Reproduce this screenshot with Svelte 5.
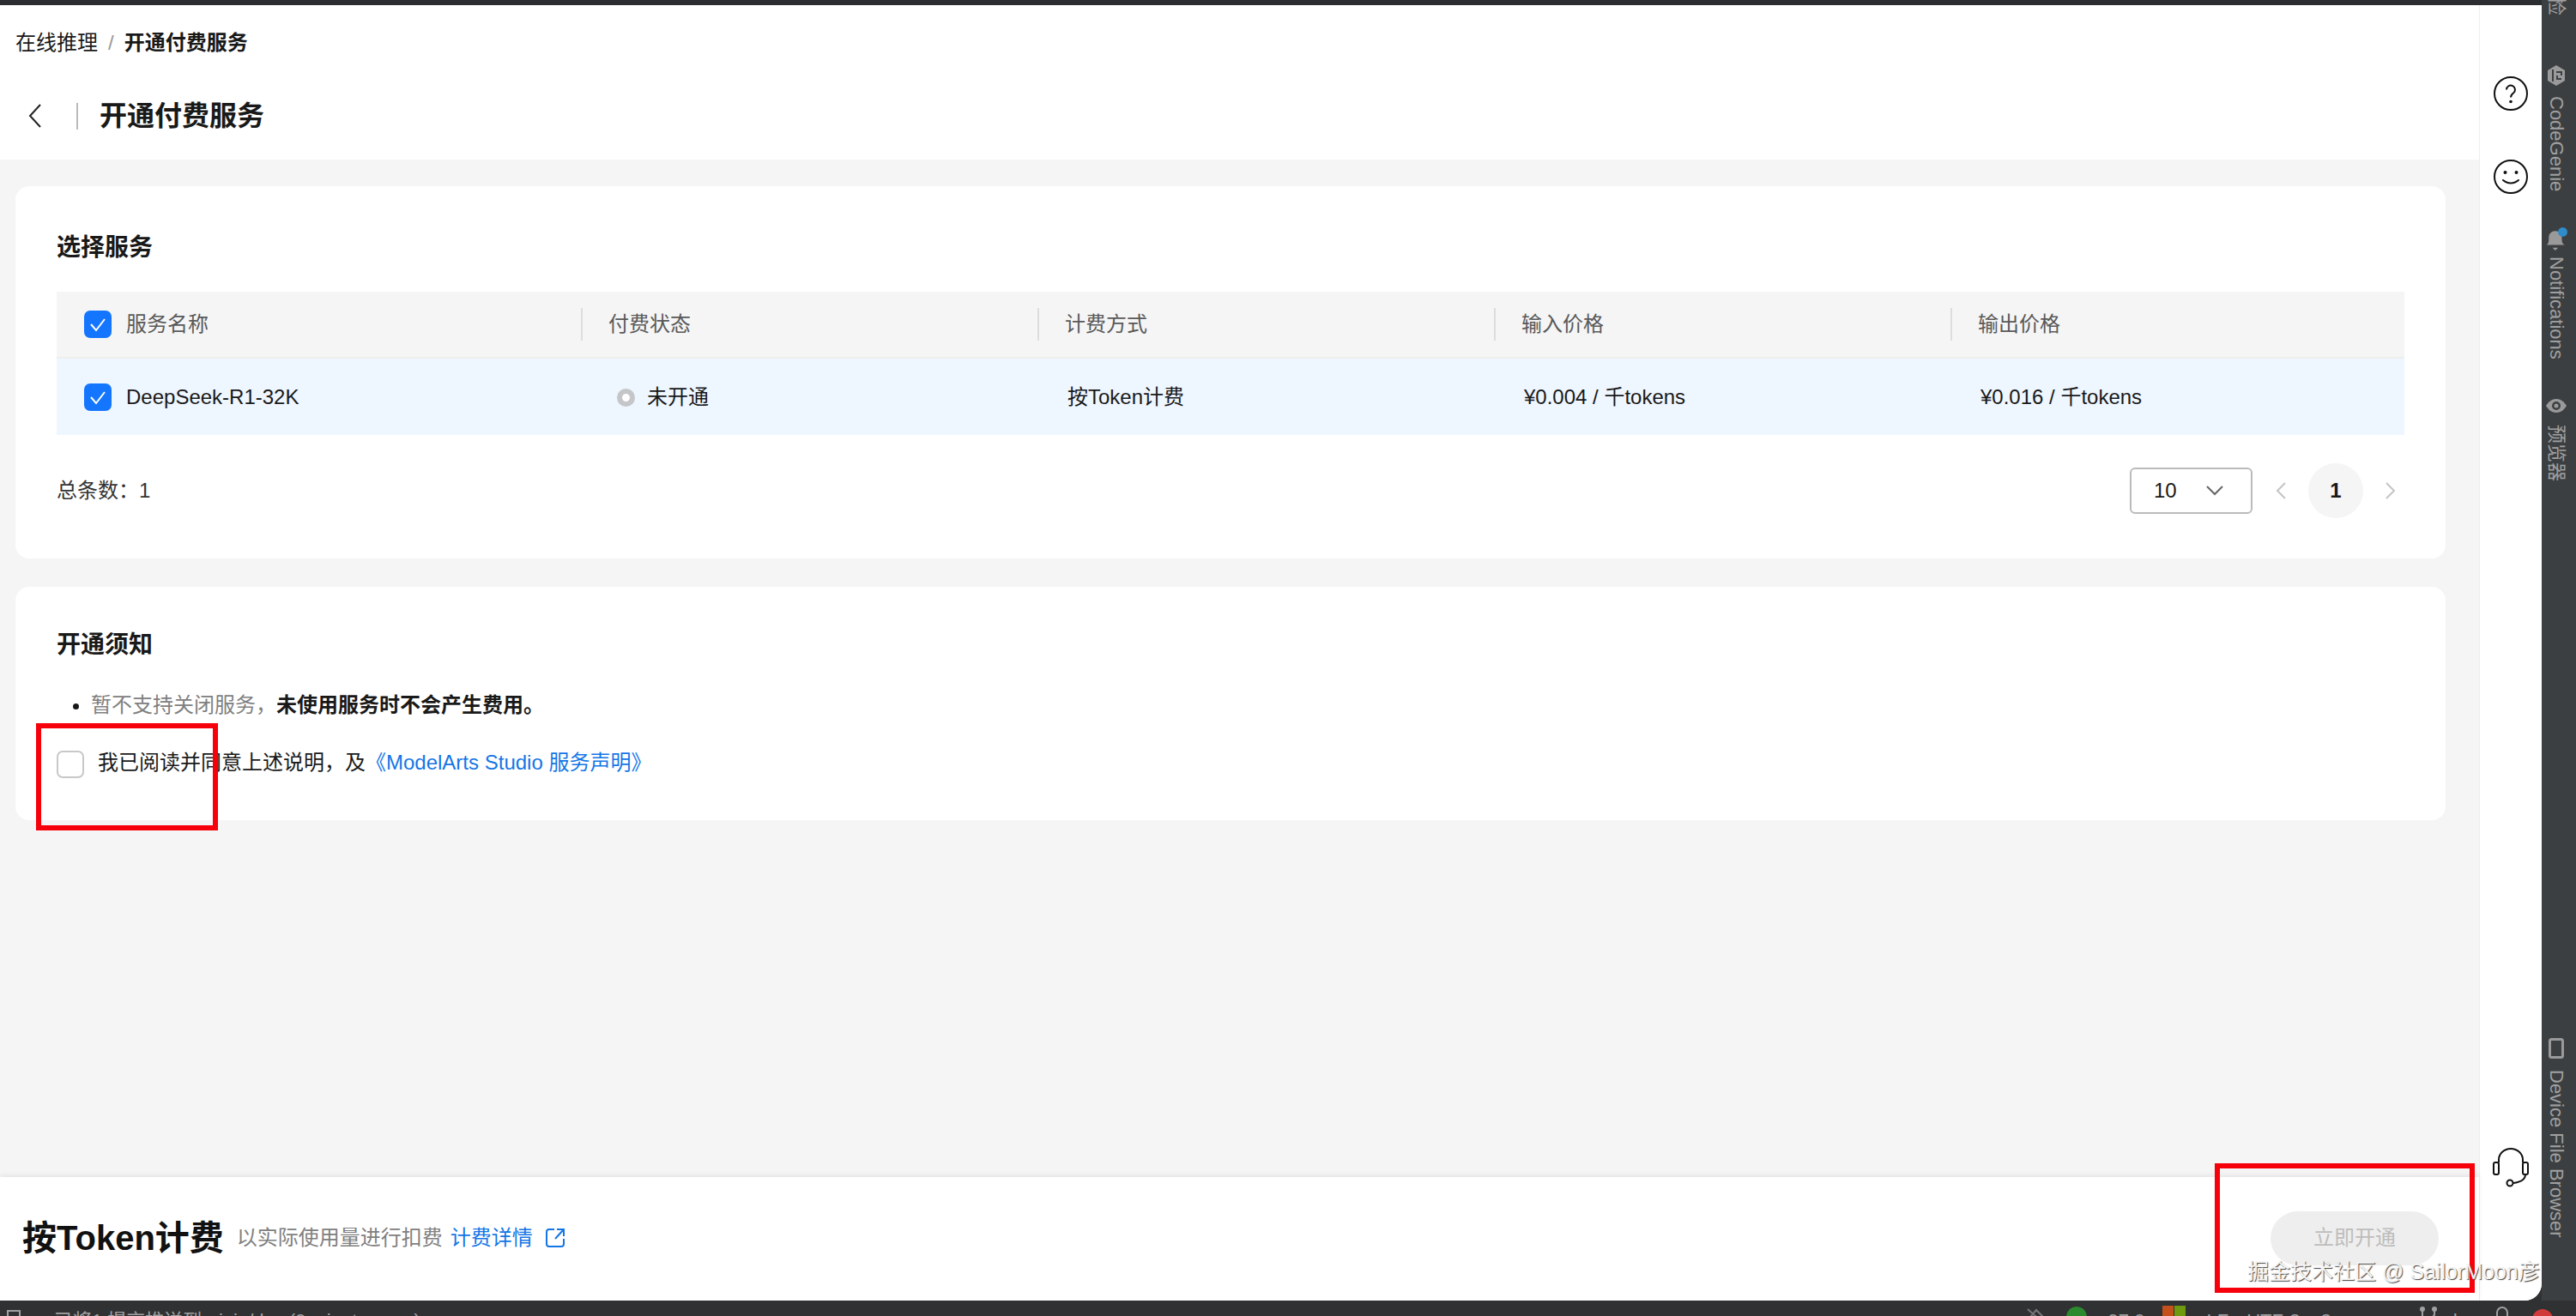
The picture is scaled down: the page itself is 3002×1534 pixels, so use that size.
<script>
	const columns = [
		{ title: '服务名称', value: 'DeepSeek-R1-32K' },
		{ title: '付费状态', value: '未开通', status: true },
		{ title: '计费方式', value: '按Token计费' },
		{ title: '输入价格', value: '¥0.004 / 千tokens' },
		{ title: '输出价格', value: '¥0.016 / 千tokens' }
	];
</script>

{#snippet check()}
	<span class="check">
		<svg viewBox="0 0 32 32" width="32" height="32">
			<polyline points="8,16 14,23 24,10" fill="none" stroke="#fff" stroke-width="2" />
		</svg>
	</span>
{/snippet}

<div class="window">
	<div class="top-area">
		<div class="left">
			<div class="topbar"></div>
			<div class="panes">
				<main class="main">
					<header class="head">
						<div class="crumbs">
							<span>在线推理</span>
							<span class="slash">/</span>
							<b>开通付费服务</b>
						</div>
						<div class="title-row">
							<svg class="back" viewBox="0 0 16 32" width="16" height="32">
								<polyline points="14,3 2,16 14,29" fill="none" stroke="#222" stroke-width="2" />
							</svg>
							<span class="title-div"></span>
							<h1>开通付费服务</h1>
						</div>
					</header>

					<div class="content">
						<section class="card">
							<h2>选择服务</h2>
							<div class="table">
								<div class="tr th">
									{#each columns as col, i}
										<div class="cell" class:first={i === 0}>
											{#if i === 0}{@render check()}{/if}
											<span>{col.title}</span>
										</div>
									{/each}
								</div>
								<div class="tr td">
									{#each columns as col, i}
										<div class="cell" class:first={i === 0}>
											{#if i === 0}{@render check()}{/if}
											{#if col.status}<span class="dot"></span>{/if}
											<span>{col.value}</span>
										</div>
									{/each}
								</div>
							</div>
							<div class="pager-row">
								<span>总条数：1</span>
								<div class="pager">
									<div class="select">
										<span>10</span>
										<svg viewBox="0 0 20 12" width="20" height="12">
											<polyline points="1,1 10,10 19,1" fill="none" stroke="#666" stroke-width="2" />
										</svg>
									</div>
									<svg viewBox="0 0 14 22" width="14" height="22">
										<polyline points="12,2 3,11 12,20" fill="none" stroke="#c4c4c4" stroke-width="2" />
									</svg>
									<span class="page">1</span>
									<svg viewBox="0 0 14 22" width="14" height="22">
										<polyline points="2,2 11,11 2,20" fill="none" stroke="#c4c4c4" stroke-width="2" />
									</svg>
								</div>
							</div>
						</section>

						<section class="card notice">
							<h2>开通须知</h2>
							<ul>
								<li><span class="muted">暂不支持关闭服务，</span><b>未使用服务时不会产生费用。</b></li>
							</ul>
							<div class="agree">
								<span class="box"></span>
								<span class="agree-text">我已阅读并同意上述说明，及</span>
								<a class="agree-text" href="#top">《ModelArts Studio 服务声明》</a>
							</div>
						</section>
					</div>

					<footer class="foot">
						<div class="price">
							<strong>按Token计费</strong>
							<span class="muted">以实际使用量进行扣费</span>
							<a href="#top">计费详情</a>
							<svg viewBox="0 0 24 24" width="24" height="24">
								<path d="M11 2H5a3 3 0 0 0-3 3v14a3 3 0 0 0 3 3h14a3 3 0 0 0 3-3v-6M14 2h8v8M22 2 12 13" fill="none" stroke="#1476e6" stroke-width="2" />
							</svg>
						</div>
						<button disabled>立即开通</button>
					</footer>
				</main>

				<aside class="side">
					<svg viewBox="0 0 40 40" width="40" height="40">
						<circle cx="20" cy="20" r="19" fill="none" stroke="#111" stroke-width="2" />
						<path d="M15 15.5a5 5 0 1 1 8 4c-2 1.500-3 2.500-3 5" fill="none" stroke="#111" stroke-width="2" />
						<circle cx="20" cy="29.500" r="1.800" fill="#111" />
					</svg>
					<svg viewBox="0 0 40 40" width="40" height="40">
						<circle cx="20" cy="20" r="19" fill="none" stroke="#111" stroke-width="2" />
						<circle cx="13.500" cy="15" r="2" fill="#111" />
						<circle cx="26.500" cy="15" r="2" fill="#111" />
						<path d="M11 24c5 4.500 13 4.500 18 0" fill="none" stroke="#111" stroke-width="2" stroke-linecap="round" />
					</svg>
					<svg class="support" viewBox="0 0 42 46" width="42" height="46">
						<path d="M7 17v-3a14 13 0 0 1 28 0v3" fill="none" stroke="#111" stroke-width="2" />
						<rect x="1" y="17" width="6" height="14" rx="2" fill="none" stroke="#111" stroke-width="2" />
						<rect x="35" y="17" width="6" height="14" rx="2" fill="none" stroke="#111" stroke-width="2" />
						<path d="M38 31c0 6-6 9-14 10" fill="none" stroke="#111" stroke-width="2" />
						<circle cx="20" cy="41" r="3.500" fill="#fff" stroke="#111" stroke-width="2" />
					</svg>
				</aside>
			</div>

			<div class="mark mark-agree"></div>
			<div class="mark mark-submit"></div>
			<div class="watermark">掘金技术社区 @ SailorMoon彦</div>
		</div>

		<nav class="strip">
			<span class="tool cut">检</span>
			<svg class="genie" viewBox="2 0 20 24" width="22" height="24">
				<path d="M12 0 22 6v12l-10 6-10-6V6z" fill="#9a9a9a" />
				<path d="M8 5v14M12 8h6v4" fill="none" stroke="#3c3f41" stroke-width="2" />
				<path d="M18 16h-5v-4" fill="none" stroke="#3c3f41" stroke-width="2" />
			</svg>
			<span class="tool">CodeGenie</span>
			<svg class="bell" viewBox="1 0 23 25" width="25" height="27">
				<path d="M1 19c3-1 3-4 3-8 0-4 3-7 7-7s7 3 7 7c0 4 0 7 4 8z" fill="#9a9a9a" />
				<path d="M8 22h6l-3 3z" fill="#9a9a9a" />
				<circle cx="19" cy="5" r="5" fill="#2e8ccb" />
			</svg>
			<span class="tool">Notifications</span>
			<svg class="eye" viewBox="0 0 26 18" width="26" height="18">
				<path d="M1 9c3-5 7-8 12-8s9 3 12 8c-3 5-7 8-12 8S4 14 1 9z" fill="#9a9a9a" />
				<circle cx="13" cy="9" r="5" fill="#3c3f41" />
				<circle cx="13" cy="9" r="2.500" fill="#9a9a9a" />
			</svg>
			<span class="tool">预览器</span>
			<svg class="device" viewBox="0 0 18 24" width="18" height="24">
				<rect x="1.500" y="1.500" width="15" height="21" rx="2" fill="none" stroke="#9a9a9a" stroke-width="3" />
			</svg>
			<span class="tool">Device File Browser</span>
		</nav>
	</div>

	<div class="status">
		<span class="status-square"></span>
		<span class="status-msg">已将1 提交推送到origin/dev (9 minutes ago)</span>
		<div class="status-right">
			<svg class="st-pen" viewBox="0 0 22 24" width="22" height="24">
				<path d="M2 4 20 20M6 12l6-7 7 7-4 8H7z" fill="none" stroke="#777" stroke-width="2" />
			</svg>
			<span class="green"></span>
			<span class="pos">97:0</span>
			<span class="bars"><i></i><i></i></span>
			<span class="s1">LF</span>
			<span class="s2">UTF-8</span>
			<span class="s3">2 spaces</span>
			<svg class="st-branch" viewBox="0 0 22 24" width="22" height="24">
				<path d="M4 2v20M18 2v8c0 3-4 4-14 6" fill="none" stroke="#a0a0a0" stroke-width="2" />
				<circle cx="4" cy="4" r="3" fill="#a0a0a0" />
				<circle cx="18" cy="4" r="3" fill="#a0a0a0" />
			</svg>
			<span class="s4">dev</span>
			<svg class="st-lock" viewBox="0 0 20 24" width="20" height="24">
				<path d="M4 14V8a6 6 0 0 1 12 0v6" fill="none" stroke="#a0a0a0" stroke-width="2" />
				<rect x="2" y="14" width="16" height="10" fill="#a0a0a0" />
			</svg>
			<span class="alert"></span>
		</div>
	</div>
</div>

<style>
	:global(body) {
		margin: 0;
		background: #2f3133;
	}
	.window {
		display: flex;
		flex-direction: column;
		width: 3002px;
		height: 1534px;
		overflow: hidden;
		font-family: 'Liberation Sans', 'Noto Sans CJK SC', sans-serif;
		font-size: 24px;
		line-height: 36px;
		color: #191919;
	}
	.top-area {
		display: flex;
		height: 1516px;
	}
	.left {
		position: relative;
		flex: 1;
		display: flex;
		flex-direction: column;
		overflow: hidden;
		background: #fff;
		border-bottom-right-radius: 20px;
	}
	.topbar {
		height: 6px;
		background: #2b2d30;
	}
	.panes {
		flex: 1;
		display: flex;
		min-height: 0;
	}
	.main {
		flex: 1;
		display: flex;
		flex-direction: column;
		background: #f5f5f5;
		min-width: 0;
	}

	/* 顶部面包屑和标题 */
	.head {
		background: #fff;
		padding: 26px 18px 27px;
	}
	.crumbs {
		display: flex;
		gap: 12px;
	}
	.slash {
		color: #999;
	}
	.title-row {
		display: flex;
		align-items: center;
		height: 48px;
		margin-top: 43px;
	}
	.back {
		margin-left: 15px;
	}
	.title-div {
		width: 2px;
		height: 31px;
		margin-left: 40px;
		background: #bbb;
	}
	h1 {
		margin: 0 0 0 25px;
		font-size: 32px;
		line-height: 48px;
		font-weight: 700;
	}

	.content {
		flex: 1;
		display: flex;
		flex-direction: column;
		gap: 33px;
		padding: 31px 39px 0 18px;
	}
	.card {
		background: #fff;
		border-radius: 16px;
		padding: 52px 48px 52px 48px;
	}
	.notice {
		padding-top: 48px;
		padding-bottom: 46px;
	}
	h2 {
		margin: 0;
		font-size: 28px;
		line-height: 40px;
		font-weight: 700;
	}

	/* 表格 */
	.table {
		margin-top: 31px;
	}
	.tr {
		display: grid;
		grid-template-columns: 611px 532px 532px 532px 1fr;
		align-items: center;
	}
	.th {
		height: 76px;
		background: #f5f5f5;
		border-bottom: 2px solid #eee;
		color: #595959;
	}
	.td {
		height: 89px;
		background: #eef6ff;
	}
	.cell {
		display: flex;
		align-items: center;
		height: 38px;
	}
	.th .cell {
		padding-left: 30px;
		border-left: 2px solid #ddd;
	}
	.td .cell {
		padding-left: 35px;
	}
	.th .cell.first,
	.td .cell.first {
		padding-left: 32px;
		border-left: 0;
		gap: 17px;
	}
	.check {
		width: 32px;
		height: 32px;
		border-radius: 7px;
		background: #1476ff;
	}
	.check svg {
		display: block;
	}
	.dot {
		box-sizing: border-box;
		width: 21px;
		height: 21px;
		margin: 2px 14px 0 7px;
		border: 6px solid #c4c6c8;
		border-radius: 50%;
		background: #fff;
	}

	.pager-row {
		display: flex;
		align-items: center;
		justify-content: space-between;
		height: 54px;
		margin-top: 38px;
		color: #333;
	}
	.pager {
		display: flex;
		align-items: center;
		margin-right: 9px;
	}
	.select {
		box-sizing: border-box;
		display: flex;
		align-items: center;
		justify-content: space-between;
		width: 143px;
		height: 54px;
		padding: 0 32px 0 26px;
		margin-right: 26px;
		border: 2px solid #bbb;
		border-radius: 6px;
		color: #191919;
	}
	.page {
		width: 64px;
		height: 64px;
		margin: 0 25px;
		border-radius: 50%;
		background: #f5f5f5;
		font-weight: 700;
		line-height: 64px;
		text-align: center;
		color: #191919;
	}

	/* 开通须知 */
	ul {
		margin: 32px 0 0;
		padding: 0 0 0 40px;
	}
	.muted {
		color: #808080;
	}
	.agree {
		display: flex;
		align-items: center;
		margin-top: 31px;
	}
	.agree-text {
		padding-bottom: 3px;
	}
	.box {
		box-sizing: border-box;
		width: 32px;
		height: 32px;
		margin-right: 16px;
		border: 2px solid #c8c8c8;
		border-radius: 7px;
		background: #fff;
	}
	a {
		color: #1476e6;
		text-decoration: none;
	}

	/* 底部栏 */
	.foot {
		position: relative;
		display: flex;
		align-items: center;
		justify-content: space-between;
		box-sizing: border-box;
		height: 144px;
		padding: 0 47px 2px 26px;
		background: #fff;
		box-shadow: 0 -2px 6px rgba(0, 0, 0, 0.07);
	}
	.price {
		display: flex;
		align-items: center;
	}
	.price strong {
		font-size: 40px;
		line-height: 48px;
		margin-right: 15px;
		color: #111;
	}
	.price a {
		margin: 0 14px 0 9px;
	}
	.foot button {
		width: 196px;
		height: 63px;
		border: 0;
		border-radius: 32px;
		background: #eeeeee;
		color: #bdbdbd;
		font: inherit;
	}

	/* 右侧悬浮图标 */
	.side {
		display: flex;
		flex-direction: column;
		align-items: center;
		gap: 57px;
		box-sizing: border-box;
		width: 73px;
		padding: 83px 0 132px;
		background: #fff;
		border-left: 1px solid #eeeeee;
	}
	.support {
		margin-top: auto;
	}

	/* 截图上的红框和水印 */
	.mark {
		position: absolute;
		box-sizing: border-box;
		border: 6px solid #f5000b;
	}
	.mark-agree {
		left: 42px;
		top: 843px;
		width: 212px;
		height: 125px;
	}
	.mark-submit {
		left: 2581px;
		top: 1356px;
		width: 303px;
		height: 151px;
	}
	.watermark {
		position: absolute;
		left: 2619px;
		top: 1464px;
		white-space: nowrap;
		font-size: 25px;
		color: #f6f6f6;
		text-shadow: 1px 1px 1px #444;
	}

	/* IDE 工具条 */
	.strip {
		display: flex;
		flex-direction: column;
		align-items: center;
		box-sizing: border-box;
		width: 40px;
		padding-right: 6px;
		overflow: hidden;
		background: #3c3f41;
		color: #a0a0a0;
		font-size: 22px;
	}
	.tool {
		writing-mode: vertical-rl;
		text-orientation: sideways;
		line-height: 26px;
		white-space: nowrap;
	}
	.cut {
		margin-top: -4px;
		height: 27px;
	}
	.genie {
		margin-top: 53px;
	}
	.strip .tool:nth-of-type(2) {
		margin-top: 12px;
	}
	.bell {
		margin-top: 42px;
	}
	.strip .tool:nth-of-type(3) {
		margin-top: 7px;
	}
	.eye {
		margin-top: 45px;
	}
	.strip .tool:nth-of-type(4) {
		margin-top: 13px;
	}
	.device {
		margin-top: auto;
	}
	.strip .tool:nth-of-type(5) {
		margin-top: 13px;
		margin-bottom: 73px;
	}

	/* 状态栏(只露出上半部分) */
	.status {
		position: relative;
		flex: 1;
		display: flex;
		align-items: flex-start;
		overflow: hidden;
		padding-top: 6px;
		background: #2f3133;
		color: #a0a0a0;
		font-size: 22px;
	}
	.status-square {
		box-sizing: border-box;
		width: 16px;
		height: 20px;
		margin: 5px 0 0 8px;
		border: 2px solid #a0a0a0;
	}
	.status-msg {
		margin-left: 39px;
	}
	.status-right {
		display: flex;
		margin-left: auto;
		padding-right: 27px;
	}
	.green {
		width: 24px;
		height: 24px;
		margin: 1px 0 0 25px;
		border-radius: 50%;
		background: #2b8a2e;
	}
	.pos {
		margin-left: 25px;
	}
	.bars {
		display: flex;
		gap: 1px;
		margin: 0 0 0 21px;
	}
	.bars i {
		width: 13px;
		height: 20px;
		background: #c4501b;
	}
	.bars i + i {
		background: #6f9a0f;
	}
	.s1 {
		margin-left: 24px;
	}
	.s2 {
		margin-left: 21px;
	}
	.s3 {
		margin-left: 24px;
	}
	.st-branch {
		margin-left: 26px;
	}
	.s4 {
		margin-left: 11px;
	}
	.st-lock {
		margin-left: 19px;
	}
	.alert {
		width: 24px;
		height: 24px;
		margin: 4px 0 0 25px;
		border-radius: 50%;
		background: #d13a3a;
	}
</style>
